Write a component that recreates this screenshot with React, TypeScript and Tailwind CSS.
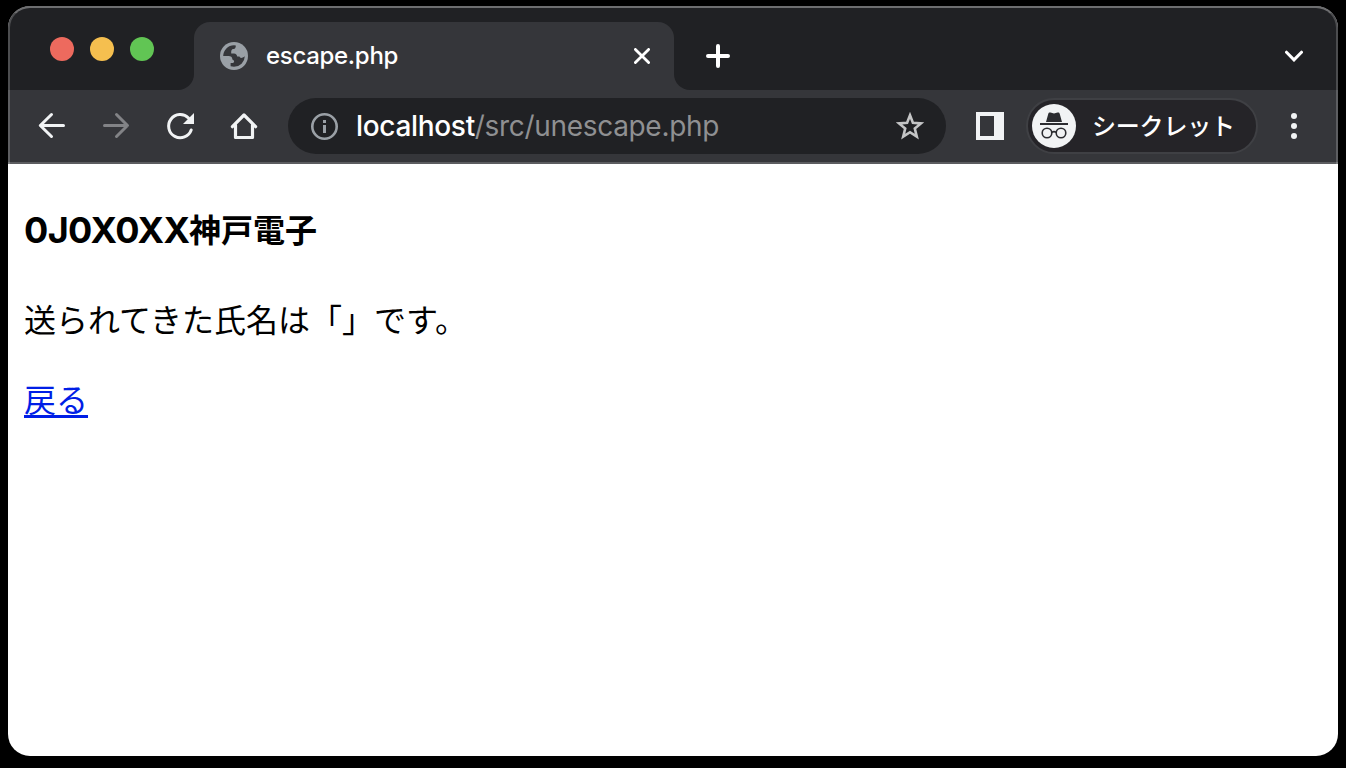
import React from "react";

const ui = "font-['Inter','Noto_Sans_CJK_JP',sans-serif]";
const jp = "font-['Noto_Sans_CJK_JP',sans-serif]";

function Globe() {
  return (
    <svg className="block size-7" viewBox="0 0 28 28">
      <circle cx="14" cy="14" r="14" fill="#9aa0a6" />
      <path
        d="M3.2 14A10.8 10.8 0 0 1 14 3.3L15.8 3.4C16 5.6 14.8 7 12.8 7.1C11.6 7.6 11.2 8.6 11.2 10.3V11.5H14C15.9 11.6 17.1 13.1 17.2 14.6H19.4C20.4 16.8 22.4 16 24.8 14.2A10.8 10.8 0 0 1 14 24.8L10.6 24.3V20.9H13C14.8 20.3 14.4 18.6 12.4 17.6C12.2 14.8 10.8 14 8.6 14Z"
        fill="#35363a"
      />
    </svg>
  );
}

function TabStrip() {
  return (
    <div className="flex h-[84px] shrink-0 bg-[#202124] pt-0.5">
      <div className="flex w-[170px] shrink-0 gap-4 pt-[29px] pl-[42px]">
        <span className="size-6 rounded-full bg-[#ed6a5e]" />
        <span className="size-6 rounded-full bg-[#f5bf4f]" />
        <span className="size-6 rounded-full bg-[#61c554]" />
      </div>
      <div className="mt-3.5 flex w-4 shrink-0 items-end bg-[#35363a]">
        <div className="h-[68px] w-4 rounded-br-2xl bg-[#202124]" />
      </div>
      <div className="mt-3.5 flex w-[480px] shrink-0 items-center rounded-t-2xl bg-[#35363a] pl-[26px]">
        <Globe />
        <span className={ui + " ml-[18px] flex-1 text-[24px] leading-8 font-[450] tracking-[-0.3px] text-white"}>escape.php</span>
        <svg className="mr-6 block size-4" viewBox="0 0 16 16" fill="none" stroke="#fff" strokeWidth="2.8" strokeLinecap="round">
          <path d="M1.4 1.4L14.6 14.6M14.6 1.4L1.4 14.6" />
        </svg>
      </div>
      <div className="mt-3.5 w-4 shrink-0 bg-[#35363a]">
        <div className="h-[68px] w-4 rounded-bl-2xl bg-[#202124]" />
      </div>
      <svg className="mt-9 ml-4 block size-6" viewBox="0 0 24 24" fill="none" stroke="#fff" strokeWidth="4" strokeLinecap="round">
        <path d="M2 12H22M12 2V22" />
      </svg>
      <svg className="mt-[42px] mr-[35px] ml-auto block h-3 w-[18px]" viewBox="0 0 18 12" fill="none" stroke="#fff" strokeWidth="3" strokeLinecap="round">
        <path d="M1.5 2.2L9 9.9L16.5 2.2" />
      </svg>
    </div>
  );
}

function Toolbar() {
  return (
    <div className="flex h-[74px] shrink-0 items-start border-b-2 border-[#5c5d60] bg-[#35363a] pt-2">
      <svg className="mt-3.5 ml-7 block size-8 shrink-0" viewBox="0 0 32 32" fill="none" stroke="#f1f3f4" strokeWidth="3" strokeLinecap="round" strokeLinejoin="round">
        <path d="M27.5 13.5H4.8M15.5 2.5L4.3 13.5L15.5 24.5" />
      </svg>
      <svg className="mt-3.5 ml-8 block size-8 shrink-0" viewBox="0 0 32 32" fill="none" stroke="#828386" strokeWidth="3" strokeLinecap="round" strokeLinejoin="round">
        <path d="M4.5 13.5H27.2M16.5 2.5L27.5 13.5L16.5 24.5" />
      </svg>
      <svg className="mt-3.5 ml-8 block size-8 shrink-0" viewBox="0 0 32 32">
        <path d="M27.2 18A11.6 11.6 0 1 1 24.5 6" fill="none" stroke="#f1f3f4" strokeWidth="3" strokeLinecap="round" />
        <path d="M30 1V12H19Z" fill="#f1f3f4" />
      </svg>
      <svg className="mt-3.5 ml-8 block size-8 shrink-0" viewBox="0 0 32 32" fill="none" stroke="#f1f3f4" strokeWidth="3.2" strokeLinejoin="round" strokeLinecap="round">
        <path d="M4.4 14.7L16 3L27.6 14.7" />
        <path d="M7.5 13V25.5H24.5V13" />
      </svg>
      <div className="ml-7 flex h-14 w-[658px] shrink-0 items-center rounded-full bg-[#202124] pl-[22px]">
        <svg className="ml-px block size-7" viewBox="0 0 28 28">
          <circle cx="13.5" cy="14.5" r="12.2" fill="none" stroke="#9aa0a6" strokeWidth="2.6" />
          <path d="M12 8H15V11H12ZM12 13H15V21H12Z" fill="#9aa0a6" />
        </svg>
        <span className={ui + " ml-[17px] flex-1 text-[28px] leading-9 tracking-[-0.32px] whitespace-nowrap text-[#8f9092]"}>
          <span className="font-[450] text-white">localhost</span>/src/unescape.php
        </span>
        <svg className="mr-[22px] block size-7" viewBox="0 0 28 28" fill="none" stroke="#c4c5c6" strokeWidth="2.6">
          <path d="M14 3.3L16.9 10.8L25 11.4L18.8 16.6L20.8 24.7L14 20.2L7.2 24.7L9.2 16.6L3 11.4L11.1 10.8Z" />
        </svg>
      </div>
      <svg className="mt-3.5 ml-[30px] block size-7 shrink-0" viewBox="0 0 28 28">
        <path fillRule="evenodd" d="M0 0H28V28H0ZM4 4V24H18V4Z" fill="#f1f3f4" />
      </svg>
      <div className="ml-[22px] flex h-14 w-[232px] shrink-0 items-center rounded-full border-2 border-[#3f4044] bg-[#252428] pl-1">
        <svg className="block size-11" viewBox="0 0 44 44">
          <circle cx="22" cy="22" r="22" fill="#f1f3f4" />
          <path d="M14 18L16.3 9.7C16.6 8.6 17.4 8.3 18.5 8.6L22 9.6L25.5 8.6C26.6 8.3 27.4 8.6 27.7 9.7L30 18Z" fill="#2b2c30" />
          <path d="M8 20H36" stroke="#2b2c30" strokeWidth="2" />
          <g fill="none" stroke="#2b2c30" strokeWidth="1.6">
            <circle cx="15" cy="29" r="4.8" />
            <circle cx="29" cy="29" r="4.8" />
            <path d="M19.8 28.4Q22 26.8 24.2 28.4" />
          </g>
        </svg>
        <span className={jp + " ml-4 pb-0.5 text-[24px] leading-8 font-medium tracking-[-0.2px] whitespace-nowrap text-white"}>シークレット</span>
      </div>
      <svg className="mt-3.5 ml-[33px] block h-7 w-2 shrink-0" viewBox="0 0 8 28" fill="#f1f3f4">
        <circle cx="3" cy="4" r="3" />
        <circle cx="3" cy="14" r="3" />
        <circle cx="3" cy="24" r="3" />
      </svg>
    </div>
  );
}

export default function App() {
  return (
    <div className="h-[768px] w-[1346px] overflow-hidden bg-black px-2 pt-1.5 pb-3">
      <div className="relative flex h-[750px] flex-col overflow-hidden rounded-t-[22px] rounded-b-[22px] bg-white">
        <TabStrip />
        <Toolbar />
        <div className="pointer-events-none absolute inset-x-0 top-0 h-[158px] rounded-t-[22px] border-x-2 border-t-2 border-x-white/20 border-t-white/35" />
        <main className={jp + " flex flex-col items-start pl-4 text-[32px] text-black"}>
          <h1 className="mt-[41px] flex h-12 items-center leading-[48px] font-bold whitespace-nowrap">
            <span className="w-[165px] pt-0.5 font-['Inter',sans-serif] text-[36px] font-bold tracking-[-0.6px]">0J0X0XX</span>
            <span className="pb-0.5">神戸電子</span>
          </h1>
          <p className="mt-[41px] leading-[48px] whitespace-nowrap">送られてきた氏名は「」です。</p>
          <a href="#" className="mt-8 leading-[48px] text-[#001ee6] underline decoration-[3px] underline-offset-[3px]">戻る</a>
        </main>
      </div>
    </div>
  );
}
